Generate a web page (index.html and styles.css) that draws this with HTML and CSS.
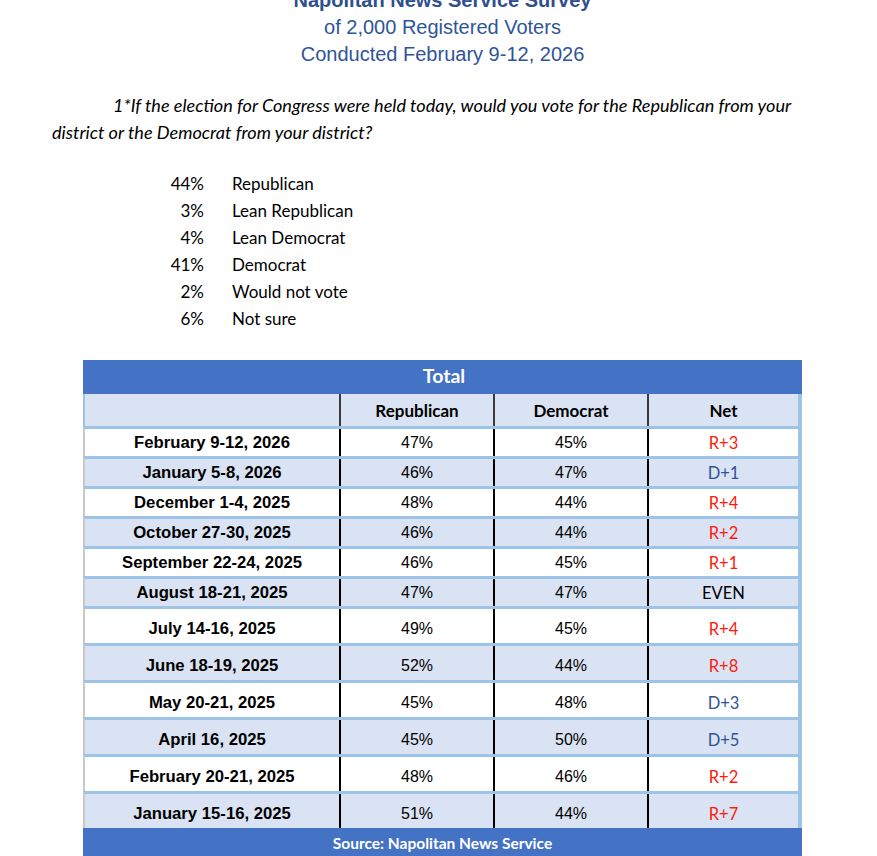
FILE: index.html
```html
<!DOCTYPE html>
<html lang="en">
<head>
<meta charset="utf-8">
<title>Napolitan News Service Survey</title>
<link rel="stylesheet" href="styles.css">
</head>
<body>
<div class="page">
  <header class="title">
    <div class="title-main">Napolitan News Service Survey</div>
    <div>of 2,000 Registered Voters</div>
    <div>Conducted February 9-12, 2026</div>
  </header>

  <p class="question">1*If the election for Congress were held today, would you vote for the Republican from your<br>district or the Democrat from your district?</p>

  <div class="answers">
    <span class="pct">44%</span><span>Republican</span>
    <span class="pct">3%</span><span>Lean Republican</span>
    <span class="pct">4%</span><span>Lean Democrat</span>
    <span class="pct">41%</span><span>Democrat</span>
    <span class="pct">2%</span><span>Would not vote</span>
    <span class="pct">6%</span><span>Not sure</span>
  </div>

  <div class="poll">
    <div class="band">Total</div>
    <div class="row head">
      <div class="cell date"></div>
      <div class="cell">Republican</div>
      <div class="cell">Democrat</div>
      <div class="cell">Net</div>
    </div>
    <div class="row short white">
      <div class="cell date">February 9-12, 2026</div><div class="cell num">47%</div><div class="cell num">45%</div><div class="cell net r">R+3</div>
    </div>
    <div class="row short tint">
      <div class="cell date">January 5-8, 2026</div><div class="cell num">46%</div><div class="cell num">47%</div><div class="cell net d">D+1</div>
    </div>
    <div class="row short white">
      <div class="cell date">December 1-4, 2025</div><div class="cell num">48%</div><div class="cell num">44%</div><div class="cell net r">R+4</div>
    </div>
    <div class="row short tint">
      <div class="cell date">October 27-30, 2025</div><div class="cell num">46%</div><div class="cell num">44%</div><div class="cell net r">R+2</div>
    </div>
    <div class="row short white">
      <div class="cell date">September 22-24, 2025</div><div class="cell num">46%</div><div class="cell num">45%</div><div class="cell net r">R+1</div>
    </div>
    <div class="row short tint">
      <div class="cell date">August 18-21, 2025</div><div class="cell num">47%</div><div class="cell num">47%</div><div class="cell net e">EVEN</div>
    </div>
    <div class="row tall white">
      <div class="cell date">July 14-16, 2025</div><div class="cell num">49%</div><div class="cell num">45%</div><div class="cell net r">R+4</div>
    </div>
    <div class="row tall tint">
      <div class="cell date">June 18-19, 2025</div><div class="cell num">52%</div><div class="cell num">44%</div><div class="cell net r">R+8</div>
    </div>
    <div class="row tall white">
      <div class="cell date">May 20-21, 2025</div><div class="cell num">45%</div><div class="cell num">48%</div><div class="cell net d">D+3</div>
    </div>
    <div class="row tall tint">
      <div class="cell date">April 16, 2025</div><div class="cell num">45%</div><div class="cell num">50%</div><div class="cell net d">D+5</div>
    </div>
    <div class="row tall white">
      <div class="cell date">February 20-21, 2025</div><div class="cell num">48%</div><div class="cell num">46%</div><div class="cell net r">R+2</div>
    </div>
    <div class="row tall tint">
      <div class="cell date">January 15-16, 2025</div><div class="cell num">51%</div><div class="cell num">44%</div><div class="cell net r">R+7</div>
    </div>
    <div class="source">Source: Napolitan News Service</div>
  </div>
</div>
</body>
</html>
```

FILE: styles.css
```css
html, body {
  margin: 0;
  padding: 0;
  background: #ffffff;
}

.page {
  padding-left: 52px;
  width: 825px;
  overflow: hidden;
}

.title {
  margin-top: -13px;
  margin-left: 31px;
  width: 719px;
  text-align: center;
  font-family: "Liberation Sans", Arial, sans-serif;
  font-size: 20px;
  line-height: 27px;
  color: #2f5597;
}

.title-main {
  font-weight: bold;
  color: #2f4f8f;
}

.question {
  margin: 23.5px 0 0 0;
  font-family: Lato, "Open Sans", sans-serif;
  font-style: italic;
  font-size: 18.1px;
  line-height: 27px;
  text-indent: 61px;
  color: #000;
  white-space: nowrap;
}

.answers {
  margin-top: 24px;
  display: grid;
  grid-template-columns: 152px auto;
  column-gap: 28px;
  font-family: Lato, "Open Sans", sans-serif;
  font-size: 17px;
  line-height: 27px;
  color: #000;
}

.pct {
  text-align: right;
}

.poll {
  margin-top: 28.5px;
  margin-left: 31px;
  width: 719px;
  background: #ffffff;
}

.band {
  height: 34px;
  line-height: 32px;
  background: #4472c4;
  color: #ffffff;
  text-align: center;
  font-family: Lato, sans-serif;
  font-weight: bold;
  font-size: 19.5px;
  padding-left: 3px;
}

.row {
  display: grid;
  grid-template-columns: 254px 154px 154px 151px;
  border-left: 2px solid #c8c8c8;
  border-right: 4px solid #9dc3e6;
  box-sizing: border-box;
}

.row.head {
  height: 32px;
  background: #dae3f3;
  border-left-color: #9dc3e6;
  font-family: Lato, sans-serif;
  font-weight: bold;
  font-size: 17px;
  color: #000;
}

.row.short,
.row.tall {
  border-top: 3px solid #9dc3e6;
}

.row.short {
  height: 30px;
}

.row.tall {
  height: 37px;
}

.row.tall .cell {
  padding-top: 6px;
}

.row.white {
  background: #ffffff;
}

.row.tint {
  background: #dae3f3;
}

.cell {
  display: flex;
  align-items: center;
  justify-content: center;
  border-left: 2px solid #000;
}

.row.head .cell {
  border-left-color: #3a3a3a;
  padding-top: 1px;
}

.cell.date {
  border-left: none;
  font-family: "Liberation Sans", Arial, sans-serif;
  font-weight: bold;
  font-size: 16.7px;
  color: #000;
}

.cell.num {
  font-family: "Liberation Sans", Arial, sans-serif;
  font-size: 16px;
  color: #000;
}

.cell.net {
  font-family: Lato, sans-serif;
  font-size: 16.5px;
}

.net.r { color: #ff1a0a; }
.net.d { color: #2f5496; }
.net.e { color: #000; }

.source {
  height: 30px;
  line-height: 30px;
  background: #4472c4;
  color: #ffffff;
  text-align: center;
  font-family: Lato, sans-serif;
  font-weight: bold;
  font-size: 15.5px;
}
```
